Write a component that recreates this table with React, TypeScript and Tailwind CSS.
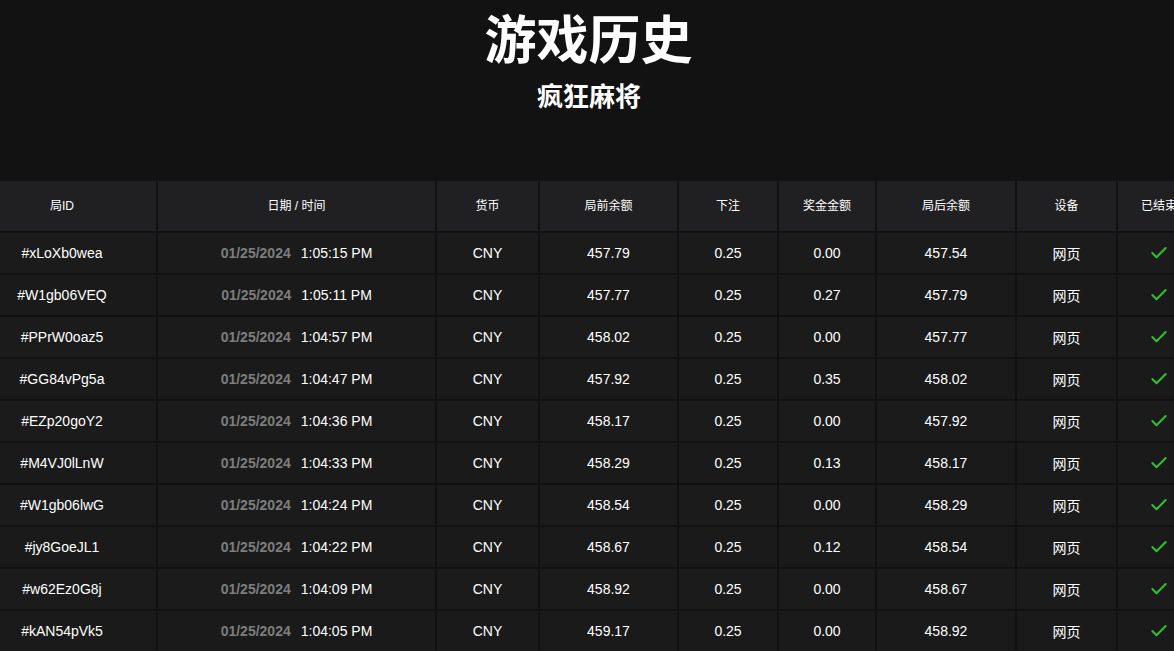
import React from 'react';
import { Check } from 'lucide-react';

interface Round {
  id: string;
  time: string;
  before: string;
  bet: string;
  win: string;
  after: string;
}

const rounds: Round[] = [
  { id: '#xLoXb0wea', time: '1:05:15 PM', before: '457.79', bet: '0.25', win: '0.00', after: '457.54' },
  { id: '#W1gb06VEQ', time: '1:05:11 PM', before: '457.77', bet: '0.25', win: '0.27', after: '457.79' },
  { id: '#PPrW0oaz5', time: '1:04:57 PM', before: '458.02', bet: '0.25', win: '0.00', after: '457.77' },
  { id: '#GG84vPg5a', time: '1:04:47 PM', before: '457.92', bet: '0.25', win: '0.35', after: '458.02' },
  { id: '#EZp20goY2', time: '1:04:36 PM', before: '458.17', bet: '0.25', win: '0.00', after: '457.92' },
  { id: '#M4VJ0lLnW', time: '1:04:33 PM', before: '458.29', bet: '0.25', win: '0.13', after: '458.17' },
  { id: '#W1gb06lwG', time: '1:04:24 PM', before: '458.54', bet: '0.25', win: '0.00', after: '458.29' },
  { id: '#jy8GoeJL1', time: '1:04:22 PM', before: '458.67', bet: '0.25', win: '0.12', after: '458.54' },
  { id: '#w62Ez0G8j', time: '1:04:09 PM', before: '458.92', bet: '0.25', win: '0.00', after: '458.67' },
  { id: '#kAN54pVk5', time: '1:04:05 PM', before: '459.17', bet: '0.25', win: '0.00', after: '458.92' },
];

const headers = ['局ID', '日期 / 时间', '货币', '局前余额', '下注', '奖金金额', '局后余额', '设备', '已结束'];

// table is wider than the window and sits centred, so both edges get cut
const cols = 'grid grid-cols-[188px_277px_101px_137px_98px_96px_138px_99px_82px] gap-x-[2px]';

export default function App() {
  return (
    <div
      className="min-h-[651px] w-[1174px] overflow-hidden bg-[#121212] text-white"
      style={{ fontFamily: '"Liberation Sans", Arial, "Noto Sans CJK SC", sans-serif' }}
    >
      <div className="flex flex-col items-center pt-[4px]" style={{ fontFamily: '"Noto Sans CJK SC", sans-serif' }}>
        <h1 className="pl-[3px] text-[52px] font-bold leading-[66px]">游戏历史</h1>
        <h2 className="mt-[8px] pl-[4px] text-[26px] font-bold leading-[34px]">疯狂麻将</h2>
      </div>

      <div className="-ml-[32px] mt-[69px] flex w-[1232px] flex-col gap-y-[2px] bg-[#111111]">
        <div className={cols}>
          {headers.map((h) => (
            <div
              key={h}
              className="flex h-[50px] items-center justify-center bg-[#202022] text-[12px]"
              style={{ fontFamily: '"Liberation Sans", "Noto Sans CJK SC", sans-serif' }}
            >
              {h}
            </div>
          ))}
        </div>

        {rounds.map((r, i) => (
          <div key={r.id} className={cols}>
            {[
              <span key="id">{r.id}</span>,
              <span key="dt" className="flex items-center gap-[10px]">
                <span className="font-bold text-[#7d7d7d]">01/25/2024</span>
                <span>{r.time}</span>
              </span>,
              'CNY',
              r.before,
              r.bet,
              r.win,
              r.after,
              <span key="dev" style={{ fontFamily: '"Noto Sans CJK SC", sans-serif' }}>网页</span>,
              <Check key="ok" className="h-[20px] w-[20px] text-[#2fbf2f]" strokeWidth={2.5} />,
            ].map((cell, j) => (
              <div
                key={j}
                className={`flex h-[40px] items-center justify-center text-[14px] ${
                  i % 2 === 0 ? 'bg-[#1b1b1c]' : 'bg-[#1a1a1a]'
                }`}
              >
                {cell}
              </div>
            ))}
          </div>
        ))}
      </div>
    </div>
  );
}
